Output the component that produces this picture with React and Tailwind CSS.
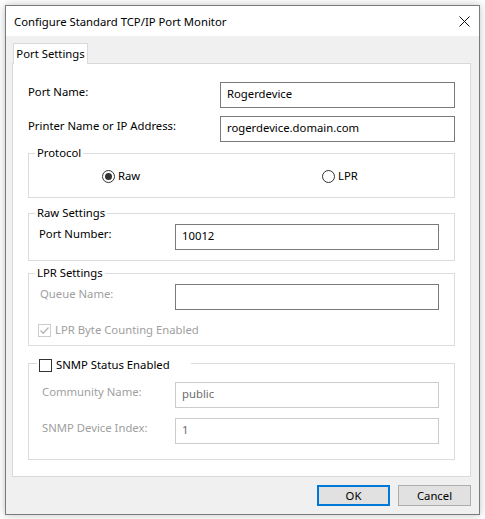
import React from 'react';

// Classic Win32 property-dialog look: white client panel on #f0f0f0 chrome
const TextBox = ({ value = '', width = 'w-[264px]', disabled = false }) => (
  <div
    className={`h-[26px] ${width} shrink-0 bg-white border pl-[6px] pt-[3px] leading-[16px] ${
      disabled ? 'border-[#cccccc] text-[#6d6d6d]' : 'border-[#7a7a7a] text-black'
    }`}
  >
    {value}
  </div>
);

const Radio = ({ checked, label }) => (
  <div className="flex items-center gap-[3px]">
    <span className="w-[13px] h-[13px] rounded-full border border-[#333333] bg-white flex items-center justify-center">
      {checked && <span className="w-[7px] h-[7px] rounded-full bg-[#333333]" />}
    </span>
    <span>{label}</span>
  </div>
);

const CheckBox = ({ checked, disabled }) => (
  <span
    className={`w-[13px] h-[13px] shrink-0 border bg-white flex items-center justify-center ${
      disabled ? 'border-[#cccccc]' : 'border-[#333333]'
    }`}
  >
    {checked && (
      <svg width="11" height="11" viewBox="0 0 11 11">
        <path d="M1.5 5.5 L4.2 8.2 L9.5 2.5" fill="none" stroke={disabled ? '#b5b5b5' : '#333333'} strokeWidth="1.3" />
      </svg>
    )}
  </span>
);

const Field = ({ label, labelPad, children, disabled }) => (
  <div className="flex items-start">
    <div className={`w-[146px] shrink-0 pt-[2px] leading-[16px] ${labelPad} ${disabled ? 'text-[#a0a0a0]' : 'text-black'}`}>
      {label}
    </div>
    {children}
  </div>
);

export default function App() {
  return (
    <div className="w-[485px] h-[519px] bg-white pt-[5px] pl-[5px] font-['Noto_Sans',sans-serif] text-[11.3px] text-black">
      <div className="w-[475px] h-[510px] border border-[#7a7a7a] shadow-[0_0_8px_rgba(0,0,0,0.25)] flex flex-col">
        {/* title bar */}
        <div className="h-[30px] bg-white flex items-center justify-between pl-[8px] pr-[9px]">
          <span className="leading-[16px] pt-[1px]">Configure Standard TCP/IP Port Monitor</span>
          <svg width="11" height="11" viewBox="0 0 11 11">
            <path d="M0.5 0.5 L10.5 10.5 M10.5 0.5 L0.5 10.5" stroke="#111111" strokeWidth="1" />
          </svg>
        </div>

        <div className="flex-1 bg-[#f0f0f0] pt-[7px] pl-[6px] pr-[8px] flex flex-col">
          {/* tab strip */}
          <div className="flex">
            <div className="ml-[1px] w-[75px] h-[21px] -mb-[1px] relative z-10 bg-white border-t border-l border-r border-[#d9d9d9] flex justify-center pt-[2px] leading-[16px]">
              Port Settings
            </div>
          </div>

          <div className="bg-white border border-[#d9d9d9] px-[15px] pt-[18px] pb-[16px] flex flex-col">
            <div className="flex items-start">
              <div className="w-[193px] pt-[2px] leading-[16px]">Port Name:</div>
              <TextBox value="Rogerdevice" width="w-[235px]" />
            </div>
            <div className="flex items-start mt-[8px]">
              <div className="w-[193px] pt-[2px] leading-[16px]">Printer Name or IP Address:</div>
              <TextBox value="rogerdevice.domain.com" width="w-[235px]" />
            </div>

            <fieldset className="w-[427px] mt-[3px] border border-[#dcdcdc] pt-[7px] pb-[13px]">
              <legend className="ml-[6px] px-[2px] leading-[16px]">Protocol</legend>
              <div className="grid grid-cols-[220px_1fr] pl-[73px] leading-[16px]">
                <Radio checked label="Raw" />
                <Radio label="LPR" />
              </div>
            </fieldset>

            <fieldset className="w-[427px] mt-[7px] border border-[#dcdcdc] pt-[3px] pb-[10px]">
              <legend className="ml-[6px] px-[2px] leading-[16px]">Raw Settings</legend>
              <Field label="Port Number:" labelPad="pl-[10px]">
                <TextBox value="10012" />
              </Field>
            </fieldset>

            <fieldset className="w-[427px] mt-[4px] border border-[#dcdcdc] pt-[3px] pb-[7px]">
              <legend className="ml-[6px] px-[2px] leading-[16px]">LPR Settings</legend>
              <Field label="Queue Name:" labelPad="pl-[11px]" disabled>
                <TextBox />
              </Field>
              <div className="mt-[12px] pl-[9px] flex items-center gap-[4px] leading-[16px] text-[#a0a0a0]">
                <CheckBox checked disabled />
                <span>LPR Byte Counting Enabled</span>
              </div>
            </fieldset>

            <fieldset className="w-[427px] mt-[9px] border border-[#dcdcdc] pt-[11px] pb-[15px]">
              <legend className="ml-[8px] pl-[2px] pr-[21px] leading-[16px]">
                <span className="flex items-center gap-[4px] translate-y-[2px]">
                  <CheckBox />
                  <span>SNMP Status Enabled</span>
                </span>
              </legend>
              <Field label="Community Name:" labelPad="pl-[13px]" disabled>
                <TextBox value="public" disabled />
              </Field>
              <div className="mt-[10px]">
                <Field label="SNMP Device Index:" labelPad="pl-[13px]" disabled>
                  <TextBox value="1" disabled />
                </Field>
              </div>
            </fieldset>
          </div>

          {/* dialog buttons */}
          <div className="mt-[8px] flex justify-end gap-[8px]">
            <button className="w-[73px] h-[21px] bg-[#e1e1e1] border-2 border-[#0078d7] leading-[16px]">OK</button>
            <button className="w-[73px] h-[21px] bg-[#e1e1e1] border border-[#adadad] leading-[16px]">Cancel</button>
          </div>
        </div>
      </div>
    </div>
  );
}
